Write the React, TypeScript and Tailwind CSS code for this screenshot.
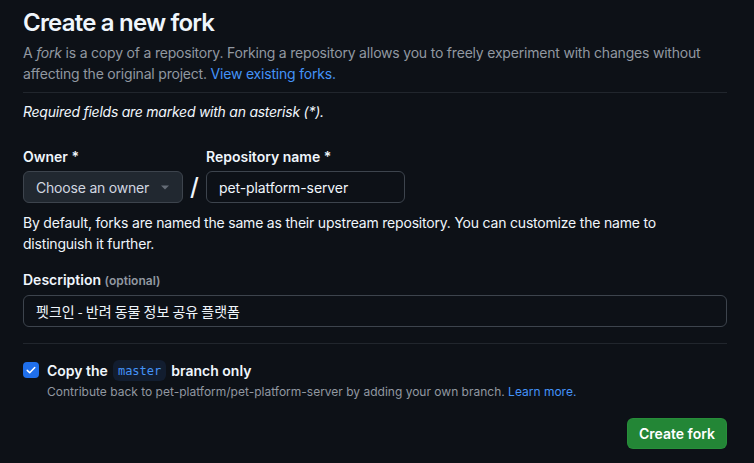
import React from "react";

export default function App() {
  return (
    <div
      className="min-h-[463px] w-full bg-[#0d1117] text-[#e6edf3]"
      style={{ fontFamily: 'Inter, "Noto Sans", "Noto Sans CJK KR", sans-serif' }}
    >
      <div className="w-[704px] ml-[23px] pt-[5px]">
        <h1 className="text-[24px] leading-[36px] font-semibold text-[#f0f6fc] tracking-[-0.8px]">
          Create a new fork
        </h1>
        <p className="text-[14px] leading-[21px] text-[#9198a1] mt-[1px] tracking-[-0.2px]">
          A <em>fork</em> is a copy of a repository. Forking a repository allows you to freely experiment with changes without
          affecting the original project.{" "}
          <a className="text-[#4493f8]">View existing forks.</a>
        </p>
        <div className="mt-[8px] h-px bg-[#21262d]" />
        <p className="mt-[8px] text-[14px] leading-[21px] italic text-[#f0f6fc] tracking-[-0.25px]">
          Required fields are marked with an asterisk (*).
        </p>

        <div className="mt-[25px] flex">
          <div className="flex flex-col">
            <label className="text-[14px] leading-[20px] font-semibold text-[#f0f6fc]">Owner *</label>
            <div className="mt-[4px] h-[32px] w-[160px] rounded-[6px] border border-[#3d444d] bg-[#212830] flex items-center pl-[12px] pr-[12px] justify-between">
              <span className="text-[14px] text-[#d1d7e0] tracking-[-0.2px]">Choose an owner</span>
              <svg width="8" height="5" viewBox="0 0 8 5" className="mr-[1px]">
                <path d="M0 0.5 L8 0.5 L4 4.5 Z" fill="#656c76" />
              </svg>
            </div>
          </div>
          <div className="w-[23px] flex items-end justify-center">
            <span className="text-[24px] leading-[32px] font-medium text-[#f0f6fc]">/</span>
          </div>
          <div className="flex flex-col">
            <label className="text-[14px] leading-[20px] font-semibold text-[#f0f6fc]">Repository name *</label>
            <div className="mt-[4px] h-[32px] w-[199px] rounded-[6px] border border-[#3d444d] bg-[#0d1117] flex items-center pl-[12px]">
              <span className="text-[14px] text-[#f0f6fc] tracking-[-0.1px]">pet-platform-server</span>
            </div>
          </div>
        </div>

        <p className="mt-[9px] text-[14px] leading-[21px] text-[#f0f6fc] tracking-[-0.2px]">
          By default, forks are named the same as their upstream repository. You can customize the name to
          distinguish it further.
        </p>

        <label className="block mt-[16px] text-[14px] leading-[20px] font-semibold text-[#f0f6fc]">
          Description <span className="text-[12px] text-[#9198a1] font-semibold">(optional)</span>
        </label>
        <div className="mt-[4px] h-[32px] w-full rounded-[6px] border border-[#3d444d] bg-[#0d1117] flex items-center pl-[12px]">
          <span className="text-[14px] text-[#f0f6fc]" style={{ fontFamily: '"Noto Sans CJK KR", Inter, sans-serif' }}>
            펫크인 - 반려 동물 정보 공유 플랫폼
          </span>
        </div>

        <div className="mt-[16px] h-px bg-[#21262d]" />

        <div className="mt-[16px] flex items-start">
          <div className="mt-[2px] h-[16px] w-[16px] rounded-[4px] bg-[#1f6feb] flex items-center justify-center shrink-0">
            <svg width="12" height="12" viewBox="0 0 16 16">
              <path
                d="M3 8.5 L6.3 11.6 L13 4.6"
                fill="none"
                stroke="#ffffff"
                strokeWidth="2"
                strokeLinecap="round"
                strokeLinejoin="round"
              />
            </svg>
          </div>
          <div className="ml-[8px] flex flex-col">
            <div className="flex items-center text-[14px] leading-[20px] font-semibold text-[#f0f6fc]">
              <span>Copy the</span>
              <span
                className="mx-[5px] px-[5px] h-[21px] flex items-center rounded-[6px] bg-[#121d2f] text-[#4493f8] text-[12px] font-normal"
                style={{ fontFamily: '"DejaVu Sans Mono", "Liberation Mono", monospace' }}
              >
                master
              </span>
              <span>branch only</span>
            </div>
            <p className="mt-[2px] text-[12px] leading-[18px] text-[#9198a1]">
              Contribute back to pet-platform/pet-platform-server by adding your own branch.{" "}
              <a className="text-[#4493f8]">Learn more.</a>
            </p>
          </div>
        </div>

        <div className="mt-[17px] flex justify-end">
          <button className="h-[31px] w-[100px] rounded-[6px] bg-[#238636] border border-[#2e9a40]/40 text-[14px] font-semibold text-white">
            Create fork
          </button>
        </div>
      </div>
    </div>
  );
}
